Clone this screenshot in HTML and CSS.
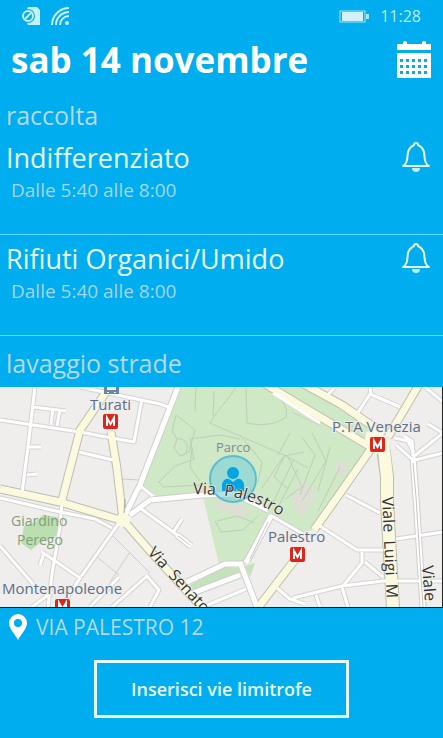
FILE: index.html
```html
<!DOCTYPE html>
<html lang="it">
<head>
    <meta charset="UTF-8">
    <meta name="viewport" content="width=device-width, initial-scale=1.0">
    <title>Raccolta rifiuti</title>
    <link rel="stylesheet" href="styles.css">
</head>
<body>
    <!-- Status bar -->
    <div class="status-bar">
        <svg class="status-sim" width="20" height="20" viewBox="0 0 20 20">
            <path d="M6 1h9l3 3v15H6l-1-2a8 8 0 0 0 0-14z" fill="#c5f0fd"/>
            <circle cx="6" cy="10" r="7" fill="#00adef"/>
            <circle cx="6" cy="10" r="5" fill="none" stroke="#c5f0fd" stroke-width="2"/>
            <path d="M3 13l6-6" stroke="#c5f0fd" stroke-width="2"/>
        </svg>
        <svg class="status-wifi" width="20" height="20" viewBox="0 0 20 20" fill="none" stroke="#c5f0fd" stroke-width="2">
            <path d="M2 19A17 17 0 0 1 19 2M6 19A13 13 0 0 1 19 6M10 19a9 9 0 0 1 9-9"/>
            <circle cx="17" cy="17" r="2" fill="#c5f0fd" stroke="none"/>
        </svg>
        <svg class="status-battery" width="31" height="13" viewBox="0 0 31 13">
            <rect x="1" y="1" width="25" height="11" fill="none" stroke="#a5e6fb"/>
            <rect x="3" y="2" width="21" height="9" fill="#d3f1fb"/>
            <path d="M27 4h3v5h-3" fill="#a5e6fb"/>
        </svg>
        <span class="status-time">11:28</span>
    </div>

    <header class="header">
        <h1>sab 14 novembre</h1>
        <button class="icon-btn" aria-label="Calendario">
            <svg width="36" height="38" viewBox="0 0 36 38">
                <path fill="#fff" d="M1 3h6V1q2-2 4 0v2h15V1q2-2 4 0v2h5v6H1z"/>
                <path fill="#fff" fill-rule="evenodd" d="M1 12h34v25H1zM4 18v3h3v-3zm6 0v3h3v-3zm6 0v3h3v-3zm6 0v3h3v-3zm6 0v3h3v-3zM4 24v3h3v-3zm6 0v3h3v-3zm6 0v3h3v-3zm6 0v3h3v-3zm6 0v3h3v-3zM4 30v3h3v-3zm6 0v3h3v-3zm6 0v3h3v-3zm6 0v3h3v-3zm6 0v3h3v-3z"/>
            </svg>
        </button>
    </header>

    <main>
        <h2>raccolta</h2>
        <div class="pickup">
            <div class="pickup-text">
                <h3>Indifferenziato</h3>
                <p>Dalle 5:40 alle 8:00</p>
            </div>
            <button class="icon-btn" aria-label="Avviso Indifferenziato">
                <svg width="30" height="32" viewBox="0 0 30 32">
                    <path d="M2 25c5-3 4-8 5-14 1-4 4-6 6-7a2 2 0 0 1 4 0c2 1 5 3 6 7 1 6 0 11 5 14z" fill="none" stroke="#e4faff" stroke-width="2" stroke-linejoin="round"/>
                    <path d="M11 27h8a4 4 0 0 1-8 0z" fill="#b5f1ff"/>
                </svg>
            </button>
        </div>
        <div class="pickup">
            <div class="pickup-text">
                <h3>Rifiuti Organici/Umido</h3>
                <p>Dalle 5:40 alle 8:00</p>
            </div>
            <button class="icon-btn" aria-label="Avviso Rifiuti Organici/Umido">
                <svg width="30" height="32" viewBox="0 0 30 32">
                    <path d="M2 25c5-3 4-8 5-14 1-4 4-6 6-7a2 2 0 0 1 4 0c2 1 5 3 6 7 1 6 0 11 5 14z" fill="none" stroke="#e4faff" stroke-width="2" stroke-linejoin="round"/>
                    <path d="M11 27h8a4 4 0 0 1-8 0z" fill="#b5f1ff"/>
                </svg>
            </button>
        </div>

        <h2>lavaggio strade</h2>
        <div class="map">
            <svg viewBox="0 0 442 220" preserveAspectRatio="xMidYMid slice">
                <defs>
                    <g id="metro">
                        <rect width="15" height="15" rx="2" fill="#e2231a"/>
                        <path d="M4 12V4l3.500 6L11 4v8" fill="none" stroke="#fff" stroke-width="2"/>
                    </g>
                    <path id="palestro" d="M193 107C225 108 250 107 294 138"/>
                    <path id="senato" d="M147 166L215 240"/>
                    <path id="luigi" d="M382 110L388 240"/>
                    <path id="viale" d="M422 179L427 240"/>

                    <!-- Side streets -->
                    <g id="streets">
                        <path d="M35 0L28 60 22 106M0 33L80 45 112 51 134 55 142 12M33 20L66 24M53 21L51 37M60 22L57 39M29 60H41M27 88L37 87M79 65L113 73M80 0L160 17 171 21"/>
                        <path d="M140 99L153 109M0 111L60 125 95 132 112 141M62 114L60 140 52 187 48 220M0 159L33 197M119 136L80 191 61 220M42 165L80 191M44 166L40 178M32 220L52 205M90 220L119 190M112 220L146 190M146 188L159 203 150 220"/>
                        <path d="M140 121L180 150M174 144L182 132M203 220L246 202M276 200L290 212 305 217M270 128L303 147"/>
                        <path d="M357 27L370 7 400 20M370 0L371 8M326 10L335 0M425 0L443 15M320 139L357 163 383 163M362 165V176L342 200 348 220M365 175L383 190M293 211L342 199 383 194 443 194M316 208L320 220M346 108L380 126M396 152L443 145M395 51L408 54 414 66M404 49L412 54 413 69M413 70L443 46M415 73L443 66M396 58L413 73M428 37L443 46"/>
                    </g>
                    <g id="wide">
                        <path d="M178 0L140 98 125 128M130 128L150 113 203 108 235 107 268 123M187 195L225 177 243 177M193 206L240 188M241 178L257 220M246 176L271 129M177 148L191 159M413 70L416 110 423 220"/>
                    </g>
                    <!-- Main roads -->
                    <g id="roads">
                        <path d="M106 5L80 43 62 113M111 45L117 82 123 133M0 102L60 115 120 133M123 133L150 164 205 224M262 -5L300 18 376 63M300 -5L342 18 384 47M420 -4L388 50M371 62L343 102 314 143M297 170L257 222"/>
                    </g>
                </defs>

                <rect width="442" height="220" fill="#f0eded"/>
                <path d="M181 0H262L372 63 312 143 300 146 270 128 248 177H219L203 110 157 109 142 99z" fill="#cfe8c6"/>
                <path d="M278 0H302L382 47 374 59z" fill="#cfe8c6"/>
                <path d="M190 198L224 180 242 181 240 188 194 204zM245 179L255 176 250 190z" fill="#c5e3ba"/>
                <path d="M24 139l11-4 8-7 14 2 4 10-5 9-15 6-10 8-10-7z" fill="#bcdfb0"/>
                <path d="M299 93l18 10-14 28-11-15zM335 76l8-2 6 6-6 10-8-4z" fill="#dedfd4"/>
                <path d="M215 112l25 4 10 10-10 5-24-10z" fill="#dcdfd2"/>

                <g fill="none" stroke="#bcd0b5">
                    <path d="M196 0l-1 24M214 4l-1 25M236 0c-7 12-18 22-26 36M246 0l1 36M210 36l30 13 44 19 24 13M247 36c14 3 29 2 39-6 3-12-7-17-8-22M176 28l-4 16 5 8-3 9 6 8 9-4 6-22-10-8-9-7M190 52l30-4 20 4M177 52c12-2 14 15 3 17M190 52l4 20-19 7-16 16 4 5 40-2M192 60l-2 20 10 14M304 65l-20 4-22 32M284 70l-10 20 14 12M288 70l14 30-17 12M217 134l20-5 18 7M215 134l6 11 22-2 16-15M240 48l22 27-4 20"/>
                    <path d="M290 46l-12 22M302 50l13 18-15 40M312 46l14 28-24 40M330 60l-12 44M340 80l-22 44M272 118l22-46M278 120l20-38"/>
                </g>
                <g fill="none" stroke="#cfcccc">
                    <path d="M113 149L150 186M97 170L119 188M130 165L110 195M122 92L140 93M292 25L319 38"/>
                </g>

                <g fill="none" stroke-linejoin="round">
                    <use href="#streets" stroke="#d5d2d2" stroke-width="5"/>
                    <use href="#wide" stroke="#d0cdcd" stroke-width="7"/>
                    <use href="#roads" stroke="#bfbcb0" stroke-width="9"/>
                    <path d="M383 60L387 90 387 115 393 221" stroke="#bfbcb0" stroke-width="14"/>
                    <use href="#streets" stroke="#fff" stroke-width="3"/>
                    <use href="#wide" stroke="#fff" stroke-width="5"/>
                    <use href="#roads" stroke="#fbfade" stroke-width="7"/>
                    <path d="M383 55L387 90 387 115 393 221" stroke="#fbfade" stroke-width="12"/>
                    <path d="M273 6L320 36" stroke="#fff" stroke-width="3"/>
                    <path d="M413 76L416 110 423 220M250 172L268 135M178 149L190 158" stroke="#c6c3c3"/>
                    <path d="M125 112L124 126" stroke="#aaa79c"/>
                    <path d="M366 45L375 43 386 50 388 60 377 67 364 60z" fill="#fbfade"/>
                    <circle cx="123" cy="133" r="7" fill="#fbfade"/>
                </g>

                <!-- Station and metro markers -->
                <path d="M104 0H119V7H104z" fill="#6688a8"/>
                <path d="M107 0H116V3H107zM107 5h2v1h-2zm7 0h2v1h-2z" fill="#fff"/>
                <use href="#metro" x="103" y="27"/>
                <use href="#metro" x="370" y="50"/>
                <use href="#metro" x="290" y="160"/>
                <use href="#metro" x="55" y="212"/>

                <!-- Current position -->
                <circle cx="233" cy="92" r="23" fill="#7cd0d8" fill-opacity=".6" stroke="#5abdd2" stroke-width="2"/>
                <g fill="#00a5e5">
                    <circle cx="233" cy="86" r="6"/>
                    <path d="M222 104V97q2-6 7-5l4 3 4-3q5-1 7 5v7z"/>
                </g>

                <g class="map-place">
                    <text x="90" y="23">Turati</text>
                    <text x="332" y="45">P.TA Venezia</text>
                    <text x="268" y="155">Palestro</text>
                    <text x="2" y="207">Montenapoleone</text>
                </g>
                <text class="map-parco" x="216" y="65">Parco</text>
                <g class="map-garden">
                    <text x="11" y="139">Giardino</text>
                    <text x="17" y="158">Perego</text>
                </g>
                <g class="map-street">
                    <text><textPath href="#palestro">Via&#160; Palestro</textPath></text>
                    <text><textPath href="#senato">Via&#160; Senato</textPath></text>
                    <text><textPath href="#luigi">Viale&#160; Luigi&#160; M</textPath></text>
                    <text><textPath href="#viale">Viale</textPath></text>
                </g>
            </svg>
        </div>

        <div class="address">
            <svg width="20" height="28" viewBox="0 0 20 28">
                <path fill="#fff" fill-rule="evenodd" d="M10 1a9 9 0 0 1 9 9c0 6-6 11-9 17C7 21 1 16 1 10a9 9 0 0 1 9-9zm0 5a4 4 0 1 0 0 8 4 4 0 0 0 0-8z"/>
            </svg>
            <span>VIA PALESTRO 12</span>
        </div>
        <button class="add-btn">Inserisci vie limitrofe</button>
    </main>
</body>
</html>
```

FILE: styles.css
```css
* {
    box-sizing: border-box;
}

body {
    margin: 0;
    background-color: #00adef;
    color: #e8fbff;
    font-family: "Open Sans", "Noto Sans", sans-serif;
}

h1, h2, h3, p {
    margin: 0;
}

svg {
    display: block;
}

button {
    font-family: inherit;
    cursor: pointer;
}

.icon-btn {
    padding: 0;
    border: none;
    background: transparent;
}

/* Status bar */
.status-bar {
    display: flex;
    align-items: center;
    height: 32px;
    padding: 0 22px;
}

.status-wifi {
    margin-left: 8px;
}

.status-battery {
    margin-left: auto;
}

.status-time {
    margin-left: 10px;
    color: #b8ebfb;
    font-size: 16px;
}

/* Date header */
.header {
    display: flex;
    align-items: center;
    justify-content: space-between;
    height: 56px;
    padding: 0 11px;
}

.header h1 {
    color: #fff;
    font-size: 35px;
    line-height: 56px;
}

h2 {
    padding: 4px 6px 0;
    color: #b5d8ee;
    font-size: 25px;
    font-weight: 400;
    line-height: 47px;
}

/* Pickup rows */
.pickup {
    display: flex;
    align-items: flex-start;
    justify-content: space-between;
    padding: 2px 12px 29px 6px;
    border-bottom: 1px solid #5fdcff;
}

.pickup + .pickup {
    padding-top: 7px;
}

.pickup h3 {
    font-size: 27px;
    font-weight: 400;
    line-height: 34px;
}

.pickup p {
    padding-left: 5px;
    color: #a5d5f0;
    font-size: 19px;
    line-height: 30px;
}

/* Map */
.map {
    border-right: 1px solid #222;
    border-bottom: 1px solid #222;
}

.map svg {
    width: 100%;
}

.map-place {
    fill: #5b7087;
    font-size: 15px;
    stroke: #f0eded;
    stroke-width: 2px;
    paint-order: stroke;
}

.map-parco {
    fill: #8a8592;
    font-size: 13px;
}

.map-garden {
    fill: #7fa07a;
    font-size: 14px;
}

.map-street {
    fill: #333;
    font-size: 16px;
    stroke: #fbfbf0;
    stroke-width: 1px;
    paint-order: stroke;
}

/* Address and action */
.address {
    display: flex;
    align-items: center;
    gap: 8px;
    height: 38px;
    padding: 0 8px;
    color: #b5d8ee;
    font-size: 21px;
    line-height: 32px;
}

.add-btn {
    display: block;
    height: 58px;
    margin: 14px auto 20px;
    padding: 0 34px;
    border: 3px solid #e8fbff;
    background: transparent;
    color: #e8fbff;
    font-size: 18px;
    font-weight: 600;
}
```
